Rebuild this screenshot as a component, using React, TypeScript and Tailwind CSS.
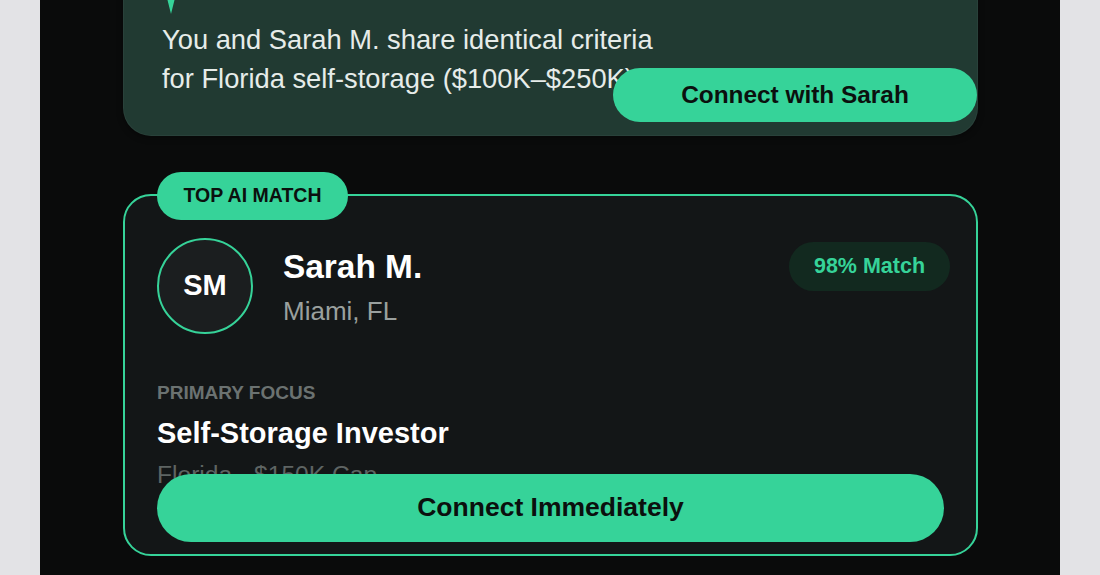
import React from "react";

export default function App() {
  return (
    <div
      className="w-full h-[575px] bg-[#e3e3e6] flex justify-center overflow-hidden"
      style={{ fontFamily: '"Liberation Sans", Arial, sans-serif' }}
    >
      <div className="w-[1020px] h-full bg-[#0a0b0b] pl-[83px] pr-[82px] flex flex-col">
        {/* Insight card */}
        <div className="relative -mt-[54px] rounded-[28px] bg-[#213a32] border border-white/[0.04] pt-[27px] pb-[37px] pl-[38px] shadow-[0_2px_6px_rgba(0,0,0,0.4)]">
          <svg width="40" height="40" viewBox="0 0 40 40" className="ml-[-11px] block">
            <polygon points="20,0 24,16 40,20 24,24 20,40 16,24 0,20 16,16" fill="#36d399" />
          </svg>
          <p className="mt-[6px] max-w-[520px] text-[27.3px] leading-[39px] text-[#e6ece9]">
            You and Sarah M. share identical criteria for Florida self-storage ($100K–$250K).
          </p>
          <button className="absolute right-0 bottom-[13px] w-[364px] h-[54px] rounded-full bg-[#36d399] text-[24.4px] font-bold text-[#0b100e] flex items-center justify-center">
            Connect with Sarah
          </button>
        </div>

        {/* Top match card */}
        <div className="relative mt-[58px] rounded-[28px] border-2 border-[#36d399] bg-[#131617] px-[32px] pt-[42px] pb-[63px]">
          <div className="absolute left-[32px] top-[-24px] w-[191px] h-[48px] rounded-full bg-[#36d399] flex items-center justify-center text-[19.5px] font-bold text-[#0b100e] uppercase">
            Top AI Match
          </div>

          <div className="flex items-start justify-between mr-[-6px]">
            <div className="flex items-start">
              <div className="w-[96px] h-[96px] rounded-full border-2 border-[#36d399] bg-[#1b1e1f] flex items-center justify-center text-[29px] font-bold text-white">
                SM
              </div>
              <div className="ml-[30px] mt-[9px] flex flex-col">
                <div className="text-[33.4px] leading-[40px] font-bold text-white">Sarah M.</div>
                <div className="mt-[8px] text-[26px] leading-[32px] text-[#9aa09e]">Miami, FL</div>
              </div>
            </div>
            <div className="mt-[4px] w-[161px] h-[49px] rounded-full bg-[#12291f] flex items-center justify-center text-[21.5px] font-bold text-[#36d399]">
              98% Match
            </div>
          </div>

          <div className="mt-[45px] text-[19px] leading-[28px] font-bold text-[#6b7271] uppercase">
            Primary Focus
          </div>
          <div className="mt-[8px] text-[29px] leading-[36px] font-bold text-white">
            Self-Storage Investor
          </div>
          <div className="mt-[8px] text-[24.6px] leading-[32px] text-[#5e6463]">
            Florida · $150K Cap
          </div>

          <button className="absolute left-[32px] right-[32px] bottom-[12px] h-[68px] rounded-full bg-[#36d399] text-[26.5px] font-bold text-[#0b100e] flex items-center justify-center">
            Connect Immediately
          </button>
        </div>
      </div>
    </div>
  );
}
